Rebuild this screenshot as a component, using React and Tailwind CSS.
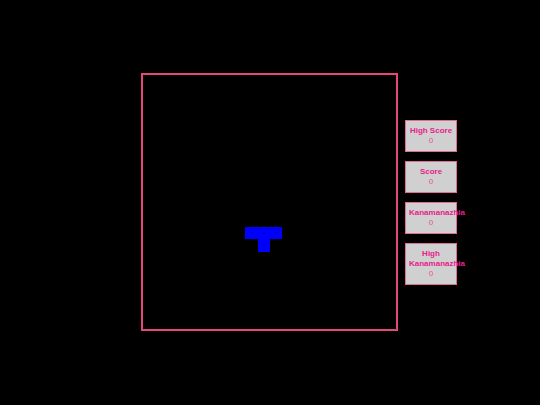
import React from "react";

const stats = [
  { label: "High Score", value: 0 },
  { label: "Score", value: 0 },
  { label: "Kanamanazhia", value: 0 },
  { label: "High Kanamanazhia", value: 0 },
];

// T piece, pixel edges of the cells inside the board
const colEdges = [102, 115, 127, 139];
const rowEdges = [152, 164, 177];
const piece = [
  [0, 0],
  [1, 0],
  [2, 0],
  [1, 1],
];

const Cell = ({ c, r }) => (
  <div
    className="absolute bg-[#0000ff] flex items-center justify-center"
    style={{
      left: colEdges[c],
      top: rowEdges[r],
      width: colEdges[c + 1] - colEdges[c],
      height: rowEdges[r + 1] - rowEdges[r],
    }}
  >
    <div className="w-[2px] h-[2px] bg-[#0000c8]" />
  </div>
);

export default function App() {
  return (
    <div className="h-screen w-full bg-black grid grid-cols-[141px_257px_1fr] items-center pb-[1px] font-['Liberation_Sans',Arial,sans-serif]">
      <div />
      <div className="relative w-[257px] h-[258px] border-2 border-[#e4467e] bg-black">
        {piece.map(([c, r], i) => (
          <Cell key={i} c={c} r={r} />
        ))}
      </div>
      <div className="ml-[7px] flex flex-col gap-[9px]">
        {stats.map((s) => (
          <div
            key={s.label}
            className="w-[52px] border border-[#e46a9c] bg-[#d0d0d0] px-[3px] py-[5px] text-center text-[8px] leading-[10px]"
          >
            <div className={`font-bold text-[#e8208c] ${s.label === "High Score" ? "whitespace-nowrap" : ""}`}>
              {s.label}
            </div>
            <div className="text-[#e3569a]">{s.value}</div>
          </div>
        ))}
      </div>
    </div>
  );
}
